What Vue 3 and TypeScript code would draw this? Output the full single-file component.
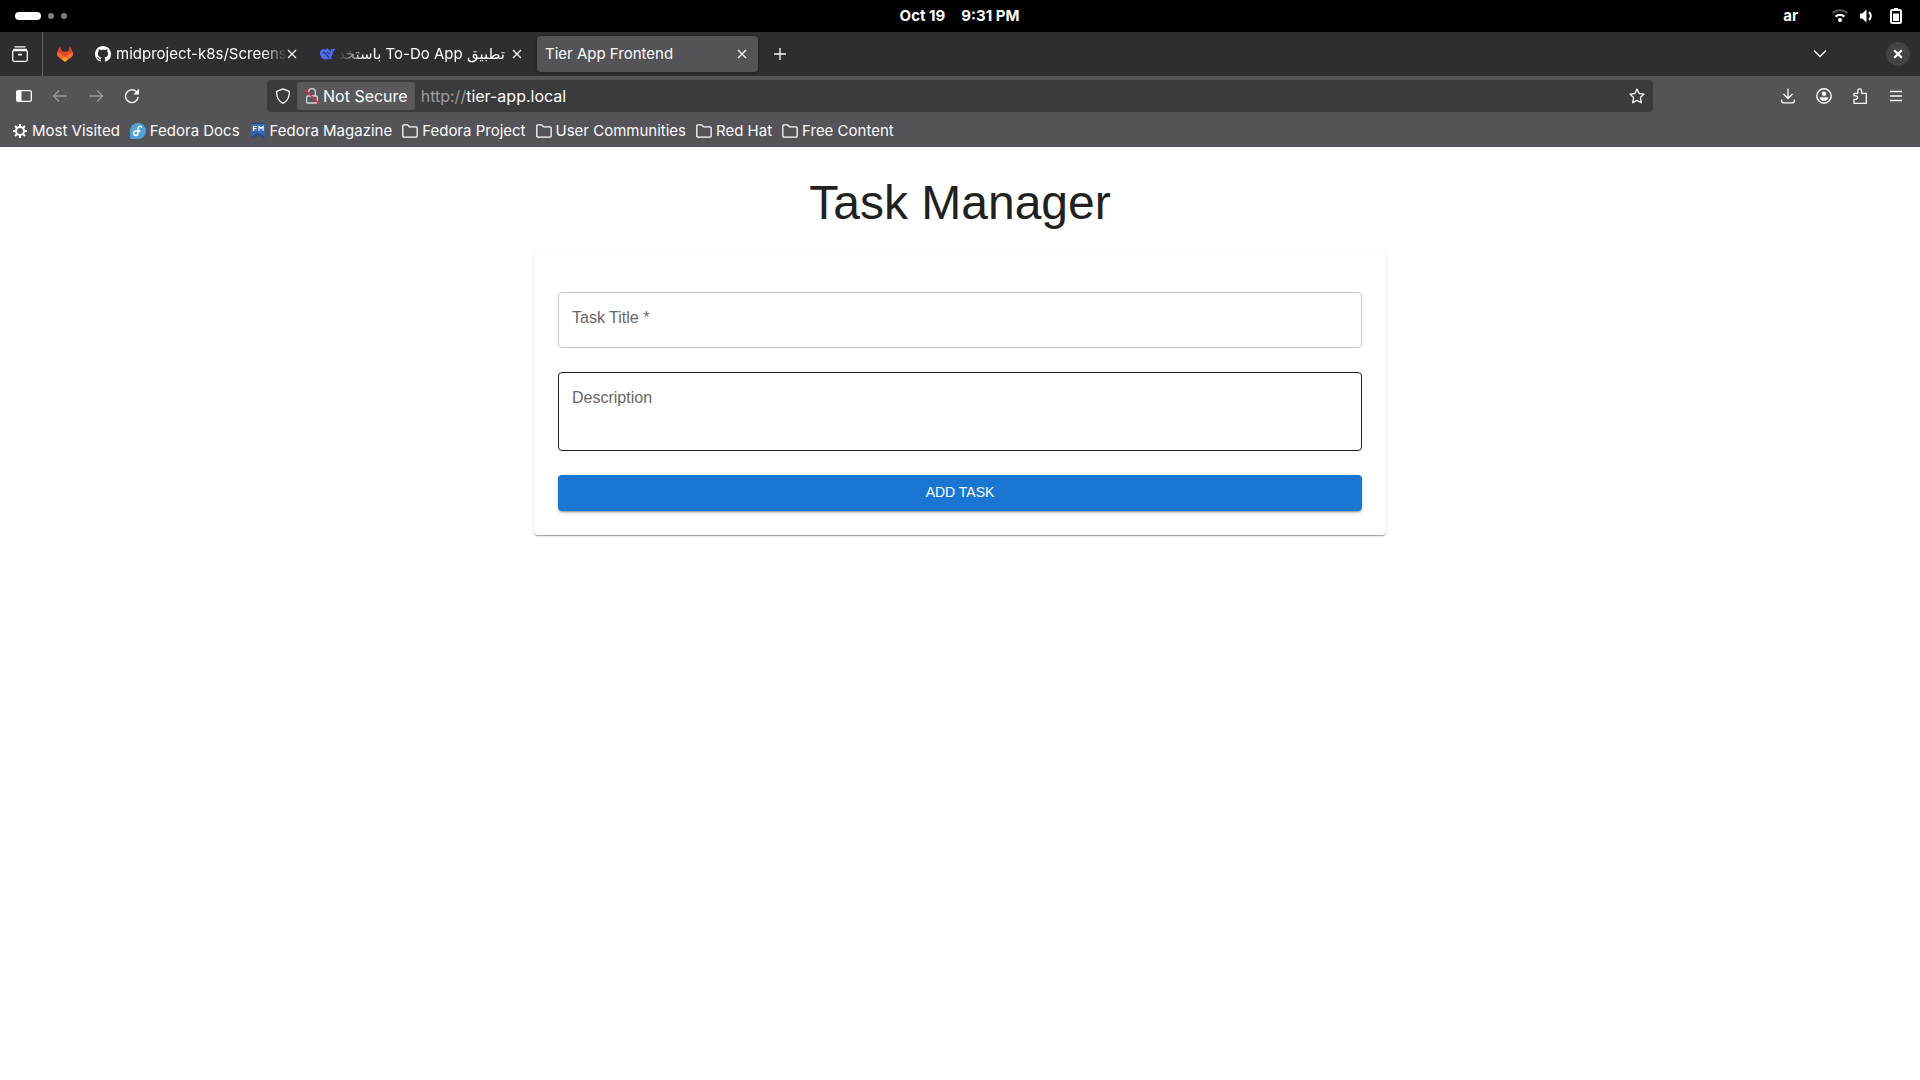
<script setup lang="ts">
import { ref } from 'vue'

interface Bookmark {
  label: string
  icon: 'gear' | 'docs' | 'magazine' | 'folder'
}

const bookmarks: Bookmark[] = [
  { label: 'Most Visited', icon: 'gear' },
  { label: 'Fedora Docs', icon: 'docs' },
  { label: 'Fedora Magazine', icon: 'magazine' },
  { label: 'Fedora Project', icon: 'folder' },
  { label: 'User Communities', icon: 'folder' },
  { label: 'Red Hat', icon: 'folder' },
  { label: 'Free Content', icon: 'folder' },
]

const gearTeeth = [0, 45, 90, 135, 180, 225, 270, 315]

const title = ref('')
const description = ref('')
</script>

<template>
  <div class="desktop">
    <header class="topbar">
      <div class="workspaces"><i class="pill"></i><i class="dot"></i><i class="dot"></i></div>
      <div class="clock"><span>Oct 19</span><span>9:31 PM</span></div>
      <div class="tray">
        <span class="lang">ar</span>
        <svg width="16" height="16" viewBox="0 0 16 16" fill="none" stroke-width="2">
          <path d="M.7 5.2a10.5 10.5 0 0 1 14.6 0" stroke="#555" />
          <path d="M3.6 8.6a6.3 6.3 0 0 1 8.8 0" stroke="#fff" stroke-width="2.2" />
          <circle cx="8" cy="12" r="2" fill="#fff" />
        </svg>
        <svg width="16" height="16" viewBox="0 0 16 16" fill="#fff">
          <path d="M2 5.500h2.200L8.500 1.500v13L4.200 10.500H2z" />
          <path d="M10.800 4.200a4.600 4.600 0 0 1 0 7.600" fill="none" stroke="#fff" stroke-width="2" />
        </svg>
        <svg width="16" height="16" viewBox="0 0 16 16">
          <path d="M6 0h4v2H6z" fill="#fff" />
          <rect x="3" y="2" width="10" height="13" rx="1.5" fill="none" stroke="#fff" stroke-width="2" />
          <path d="M5 5.500h6V13H5z" fill="#fff" />
        </svg>
      </div>
    </header>

    <nav class="tabstrip" aria-label="Tabs">
      <button class="icon-btn firefox-view" aria-label="Recent browsing">
        <svg width="16" height="16" viewBox="0 0 16 16" fill="none" stroke="#fbfbfe" stroke-width="1.3">
          <path d="M3 .8h10M1.500 3.300h13" stroke-linecap="round" />
          <rect x=".7" y="4.500" width="14.600" height="10.800" rx="1.500" />
          <path d="M6 8.600h4" stroke-width="1.600" />
        </svg>
      </button>
      <button class="tab pinned" aria-label="GitLab">
        <svg width="16" height="16" viewBox="0 0 16 16">
          <path d="M15.700 6.300 13.500.8c-.1-.3-.6-.3-.7 0L11.200 5.400H4.800L3.200.8c-.1-.3-.6-.3-.7 0L.3 6.300c-.6 1.600-.1 3.500 1.300 4.600L8 15.700l6.400-4.800c1.400-1.100 1.900-3 1.300-4.600z" fill="#e24329" />
          <path d="M15.700 6.300c-1.400.3-2.700.9-3.800 1.700L8 11 4.100 8A9.500 9.500 0 0 0 .3 6.300c-.6 1.600-.1 3.500 1.300 4.600L8 15.700l6.400-4.800c1.400-1.100 1.900-3 1.300-4.600z" fill="#fc6d26" />
          <path d="M8 11l3.200 2.300L8 15.700l-3.200-2.400z" fill="#fca326" />
        </svg>
      </button>
      <button class="tab">
        <svg width="16" height="16" viewBox="0 0 16 16" fill="#fff">
          <path d="M8 0C3.580 0 0 3.580 0 8c0 3.540 2.290 6.530 5.470 7.590.4.070.55-.17.55-.38 0-.19-.01-.82-.01-1.490-2.010.37-2.530-.49-2.690-.94-.09-.23-.48-.94-.82-1.130-.28-.15-.68-.52-.01-.53.63-.01 1.080.58 1.230.82.72 1.210 1.870.87 2.330.66.070-.52.28-.87.51-1.070-1.780-.2-3.640-.89-3.640-3.950 0-.87.31-1.590.82-2.150-.08-.2-.36-1.020.08-2.120 0 0 .67-.21 2.200.82.64-.18 1.320-.27 2-.27s1.360.09 2 .27c1.530-1.040 2.200-.82 2.200-.82.44 1.100.16 1.920.08 2.120.51.56.82 1.270.82 2.150 0 3.070-1.870 3.750-3.650 3.950.29.25.54.73.54 1.480 0 1.070-.01 1.930-.01 2.200 0 .21.15.46.55.38A8.010 8.010 0 0 0 16 8c0-4.420-3.580-8-8-8z" />
        </svg>
        <span class="tab-label fade-right">midproject-k8s/Screens</span>
        <svg class="x" viewBox="0 0 10 10"><path d="M1 1l8 8M9 1L1 9" /></svg>
      </button>
      <button class="tab">
        <svg width="16" height="16" viewBox="0 0 16 16" fill="#4d6bfe">
          <path d="M15.900 3.300c-.4.400-.9.600-1.500.5-.1 1.100-.7 1.900-1.700 2.200.1 2.300-.7 4-2 5.200l1.300 1.200c-.9.700-2 .6-3.100.1-1.900 1.300-4.300 1.400-6.200.3C.8 11.500-.2 8.900.1 6.300.3 4.500 1.600 3.300 3.400 3.200c1 0 1.800.2 2.500.7C6.300 3 6.900 2.400 7.900 2.200c-.1.600 0 1 .4 1.400 1.200.6 2.100 1.400 2.900 2.300-.6-1.100-.6-2.200.1-3.200.4.400.9.600 1.500.6.200-.5.500-.8 1-1 .4.600 1.200.9 2.100 1z" />
          <path d="M2.800 6.200c2 .2 3.500 1.600 4.500 3.300.3.600.7 1.100 1.300 1.500M7.400 6.300c.9.200 1.600.8 1.800 1.700" fill="none" stroke="#2e2d32" stroke-width="1.100" stroke-linecap="round" />
        </svg>
        <span class="tab-label fade-left" dir="rtl">تطبيق To-Do App باستخد</span>
        <svg class="x" viewBox="0 0 10 10"><path d="M1 1l8 8M9 1L1 9" /></svg>
      </button>
      <button class="tab active" aria-current="page">
        <span class="tab-label">Tier App Frontend</span>
        <svg class="x" viewBox="0 0 10 10"><path d="M1 1l8 8M9 1L1 9" /></svg>
      </button>
      <button class="icon-btn new-tab" aria-label="New tab">
        <svg width="16" height="16" viewBox="0 0 16 16" fill="none" stroke="#fbfbfe" stroke-width="1.300"><path d="M8 2v12M2 8h12" /></svg>
      </button>
      <button class="icon-btn all-tabs" aria-label="List all tabs">
        <svg width="16" height="16" viewBox="0 0 16 16" fill="none" stroke="#fbfbfe" stroke-width="1.300"><path d="M2.500 5l5.500 5.500L13.500 5" stroke-linecap="round" /></svg>
      </button>
      <button class="window-close" aria-label="Close">
        <svg width="10" height="10" viewBox="0 0 10 10" fill="none" stroke="#fff" stroke-width="2.200"><path d="M1.200 1.200l7.600 7.600M8.800 1.200L1.200 8.800" /></svg>
      </button>
    </nav>

    <div class="navbar">
      <div class="nav-side">
        <button class="icon-btn" aria-label="Show sidebar">
          <svg width="16" height="16" viewBox="0 0 16 16"><rect x=".7" y="2.700" width="14.600" height="10.600" rx="1.300" fill="none" stroke="#fbfbfe" stroke-width="1.300" /><path d="M1 3h4.500v10H1z" fill="#fbfbfe" /></svg>
        </button>
        <button class="icon-btn dim" aria-label="Back" disabled>
          <svg width="16" height="16" viewBox="0 0 16 16" fill="none" stroke="#fbfbfe" stroke-width="1.300"><path d="M15 8H1.500M7 2.500L1.500 8 7 13.500" /></svg>
        </button>
        <button class="icon-btn dim" aria-label="Forward" disabled>
          <svg width="16" height="16" viewBox="0 0 16 16" fill="none" stroke="#fbfbfe" stroke-width="1.300"><path d="M1 8h13.500M9 2.500L14.500 8 9 13.500" /></svg>
        </button>
        <button class="icon-btn" aria-label="Reload">
          <svg width="16" height="16" viewBox="0 0 16 16" fill="none" stroke="#fbfbfe" stroke-width="1.400"><path d="M14.200 9A6.400 6.400 0 1 1 12 3.300L13.500 5" /><path d="M15 .8v5.700H9.300z" fill="#fbfbfe" stroke="none" /></svg>
        </button>
      </div>
      <div class="urlbar">
        <svg width="16" height="16" viewBox="0 0 16 16" fill="none" stroke="#fbfbfe" stroke-width="1.300"><path d="M8 .8l6.300 2.500c.3 5-1.300 9.500-6.300 12-5-2.500-6.600-7-6.300-12z" stroke-linejoin="round" /></svg>
        <button class="identity">
          <svg width="16" height="16" viewBox="0 0 16 16" fill="none" stroke="#d5d5d8" stroke-width="1.300"><rect x="2.700" y="8" width="10.600" height="7" rx="1.200" /><path d="M4.700 4.300V4a3.300 3.300 0 0 1 6.600 0v4" /><path d="M1 1.500l14 14" stroke="#e22850" stroke-width="1.500" /></svg>
          <span>Not Secure</span>
        </button>
        <a class="url" href="#"><span>http://</span>tier-app.local</a>
        <svg width="16" height="16" viewBox="0 0 16 16" fill="none" stroke="#fbfbfe" stroke-width="1.300" stroke-linejoin="round"><path d="M8 1l2.100 4.500 4.900.6-3.600 3.400.9 5.300L8 12.400l-4.300 2.400.9-5.300L1 6.100l4.900-.6z" /></svg>
      </div>
      <div class="nav-side end">
        <button class="icon-btn" aria-label="Downloads">
          <svg width="16" height="16" viewBox="0 0 16 16" fill="none" stroke="#fbfbfe" stroke-width="1.300"><path d="M8 .5v10M3.500 6L8 10.500 12.500 6M1.700 11.500v1.700c0 1 .6 1.600 1.600 1.600h9.400c1 0 1.600-.6 1.600-1.600v-1.700" /></svg>
        </button>
        <button class="icon-btn" aria-label="Account">
          <svg width="16" height="16" viewBox="0 0 16 16" fill="#fbfbfe"><circle cx="8" cy="8" r="7.200" fill="none" stroke="#fbfbfe" stroke-width="1.400" /><circle cx="8" cy="5.800" r="2.300" /><path d="M3.800 9.200h8.400v1c0 1.500-2 2.600-4.200 2.600s-4.200-1.100-4.200-2.600z" /></svg>
        </button>
        <button class="icon-btn" aria-label="Extensions">
          <svg width="16" height="16" viewBox="0 0 16 16" fill="none" stroke="#fbfbfe" stroke-width="1.300" stroke-linejoin="round"><path d="M2 15.300v-4h1.800a1.600 1.600 0 0 0 0-3.500H2V5.300h3.800V2.800a1.900 1.900 0 0 1 3.800 0v2.500h4.700v10z" /></svg>
        </button>
        <button class="icon-btn" aria-label="Menu">
          <svg width="16" height="16" viewBox="0 0 16 16" stroke="#fbfbfe" stroke-width="1.300"><path d="M2 3.500h12M2 8h12M2 12.500h12" /></svg>
        </button>
      </div>
    </div>

    <div class="bookmarks">
      <a v-for="b in bookmarks" :key="b.label" href="#">
        <svg v-if="b.icon === 'gear'" width="16" height="16" viewBox="0 0 16 16" fill="none" stroke="#fbfbfe">
          <circle cx="8" cy="8" r="4" stroke-width="2" />
          <path v-for="a in gearTeeth" :key="a" d="M8 1v2.800" stroke-width="2" :transform="`rotate(${a} 8 8)`" />
        </svg>
        <svg v-else-if="b.icon === 'docs'" width="16" height="16" viewBox="0 0 16 16">
          <path d="M8 0a8 8 0 1 1 0 16H1.500A1.500 1.500 0 0 1 0 14.500V8a8 8 0 0 1 8-8z" fill="#51a2da" />
          <path d="M11.500 3.700C9.700 2.900 8 3.900 8 5.700v4.600a2.200 2.200 0 1 1-2.200-2.200H10" fill="none" stroke="#fff" stroke-width="1.500" stroke-linecap="round" />
        </svg>
        <svg v-else-if="b.icon === 'magazine'" width="16" height="16" viewBox="0 0 16 16">
          <path d="M1 0h14v16l-7-4.500L1 16z" fill="#3668b0" />
          <path d="M1 0h14v1H1zM1 16v-2l7-4.500 7 4.500v2l-7-4.500z" fill="#234a86" />
          <path d="M3.500 8V3.500H7M3.500 5.700h3M9 8V3.500l2 2 2-2V8" fill="none" stroke="#fff" stroke-width="1.200" />
        </svg>
        <svg v-else width="16" height="16" viewBox="0 0 16 16" fill="none" stroke="#fbfbfe" stroke-width="1.300">
          <path d="M.8 13V3c0-.7.400-1.200 1.200-1.200h3.500l2 2H14c.8 0 1.200.4 1.200 1.200v8c0 .7-.4 1.200-1.200 1.200H2c-.8 0-1.200-.5-1.200-1.200z" />
        </svg>
        <span>{{ b.label }}</span>
      </a>
    </div>

    <main class="page">
      <h1>Task Manager</h1>
      <form class="card" @submit.prevent>
        <div class="field">
          <input id="task-title" v-model="title" type="text" required placeholder=" " />
          <label for="task-title">Task Title *</label>
        </div>
        <div class="field hovered">
          <textarea id="task-description" v-model="description" rows="2" placeholder=" "></textarea>
          <label for="task-description">Description</label>
        </div>
        <button class="submit" type="submit">ADD TASK</button>
      </form>
    </main>
  </div>
</template>

<style>
body {
  background: #fff;
}
</style>

<style scoped>
* {
  box-sizing: border-box;
}
.desktop {
  font-family: Inter, 'DejaVu Sans', sans-serif;
  font-size: 15px;
  color: #fbfbfe;
}
button {
  font: inherit;
  color: inherit;
  background: none;
  border: 0;
  padding: 0;
}
a {
  color: inherit;
  text-decoration: none;
}
svg {
  display: block;
  flex: none;
}

/* Desktop bar */
.topbar {
  display: grid;
  grid-template-columns: 1fr auto 1fr;
  align-items: center;
  height: 32px;
  padding: 0 16px 0 15px;
  background: #000;
  color: #fff;
  font-weight: 700;
}
.workspaces {
  display: flex;
  align-items: center;
  gap: 7px;
}
.workspaces i {
  border-radius: 4px;
}
.pill {
  width: 26px;
  height: 8px;
  background: #fff;
}
.dot {
  width: 6px;
  height: 6px;
  background: #808080;
}
.clock {
  display: flex;
  gap: 16px;
}
.clock,
.lang {
  line-height: 18px;
  padding-bottom: 1px;
}
.tray {
  display: flex;
  align-items: center;
  justify-content: flex-end;
  gap: 10px;
}
.tray svg:last-child {
  margin-left: 4px;
}
.lang {
  margin-right: 24px;
}

/* Tab strip */
.tabstrip {
  display: flex;
  align-items: center;
  height: 44px;
  background: #2e2d32;
}
.icon-btn {
  display: flex;
  align-items: center;
  justify-content: center;
  width: 36px;
  height: 32px;
}
.firefox-view {
  width: 43px;
  height: 44px;
  padding-right: 2px;
  border-right: 1px solid #66656a;
}
.tab {
  display: flex;
  align-items: center;
  width: 221px;
  height: 36px;
  padding: 0 11px 0 8px;
  margin-right: 4px;
  border-radius: 4px;
  text-align: left;
}
.pinned {
  width: 32px;
  padding: 0 8px;
  margin: 0 6px;
}
.tab-label {
  flex: 1;
  min-width: 0;
  overflow: hidden;
  white-space: nowrap;
  line-height: 24px;
}
.fade-right {
  margin-left: 5px;
  mask-image: linear-gradient(to left, transparent, #000 24px);
}
.fade-left {
  margin: 0 7px 0 2px;
  mask-image: linear-gradient(to right, transparent, #000 28px);
}
.active {
  background: #545358;
  box-shadow: 0 0 3px rgba(0, 0, 0, 0.4);
}
.x {
  width: 10px;
  height: 10px;
  fill: none;
  stroke: #fbfbfe;
  stroke-width: 1.3px;
}
.all-tabs {
  margin-left: auto;
}
.window-close {
  display: flex;
  align-items: center;
  justify-content: center;
  width: 24px;
  height: 24px;
  margin: 0 10px 0 48px;
  border-radius: 50%;
  background: #434247;
}

/* Navigation bar */
.navbar {
  display: flex;
  align-items: center;
  height: 40px;
  padding: 0 6px;
  background: #545358;
}
.nav-side {
  display: flex;
  flex: 261 0 0;
}
.end {
  justify-content: flex-end;
}
.dim {
  opacity: 0.4;
}
.urlbar {
  display: flex;
  align-items: center;
  flex: 1370 0 0;
  height: 32px;
  padding: 0 8px;
  border-radius: 4px;
  background: #3b3b3d;
  font-size: 16px;
}
.identity {
  display: flex;
  align-items: center;
  gap: 3px;
  height: 28px;
  margin: 0 6px;
  padding: 0 7px;
  border-radius: 3px;
  background: #59595b;
}
.url {
  flex: 1;
}
.url span {
  color: #9b9b9d;
}

/* Bookmarks bar */
.bookmarks {
  display: flex;
  align-items: center;
  gap: 10px;
  height: 31px;
  padding: 0 12px 1px;
  background: #545358;
  border-bottom: 1px solid #4c4b51;
}
.bookmarks a {
  display: flex;
  align-items: center;
  gap: 4px;
}

/* Web page */
.page {
  max-width: 900px;
  margin: 0 auto;
  padding: 28px 24px;
  font-family: 'Liberation Sans', Arial, sans-serif;
  color: #212121;
}
h1 {
  margin: 0 0 21px;
  font-size: 48px;
  font-weight: 400;
  line-height: 56px;
  text-align: center;
}
.card {
  display: flex;
  flex-direction: column;
  gap: 24px;
  padding: 40px 24px 24px;
  border-radius: 4px;
  background: #fff;
  box-shadow:
    0 2px 1px -1px rgba(0, 0, 0, 0.2),
    0 1px 1px 0 rgba(0, 0, 0, 0.14),
    0 1px 3px 0 rgba(0, 0, 0, 0.12);
}
.field {
  position: relative;
}
.field input,
.field textarea {
  display: block;
  width: 100%;
  height: 56px;
  padding: 16px 14px;
  border: 1px solid #c4c4c4;
  border-radius: 4px;
  outline: 0;
  background: #fff;
  color: #212121;
  font: inherit;
  font-size: 16px;
  resize: none;
}
.field textarea {
  height: 79px;
}
.field.hovered textarea {
  border-color: #212121;
}
.field label {
  position: absolute;
  top: 14px;
  left: 14px;
  color: #666;
  font-size: 16px;
  line-height: 24px;
  pointer-events: none;
}
.field :not(:placeholder-shown) + label {
  display: none;
}
.submit {
  height: 36px;
  padding-bottom: 2px;
  border-radius: 4px;
  background: #1976d2;
  color: #fff;
  font-size: 14px;
  line-height: 24px;
  box-shadow:
    0 3px 1px -2px rgba(0, 0, 0, 0.2),
    0 2px 2px 0 rgba(0, 0, 0, 0.14),
    0 1px 5px 0 rgba(0, 0, 0, 0.12);
}
</style>
